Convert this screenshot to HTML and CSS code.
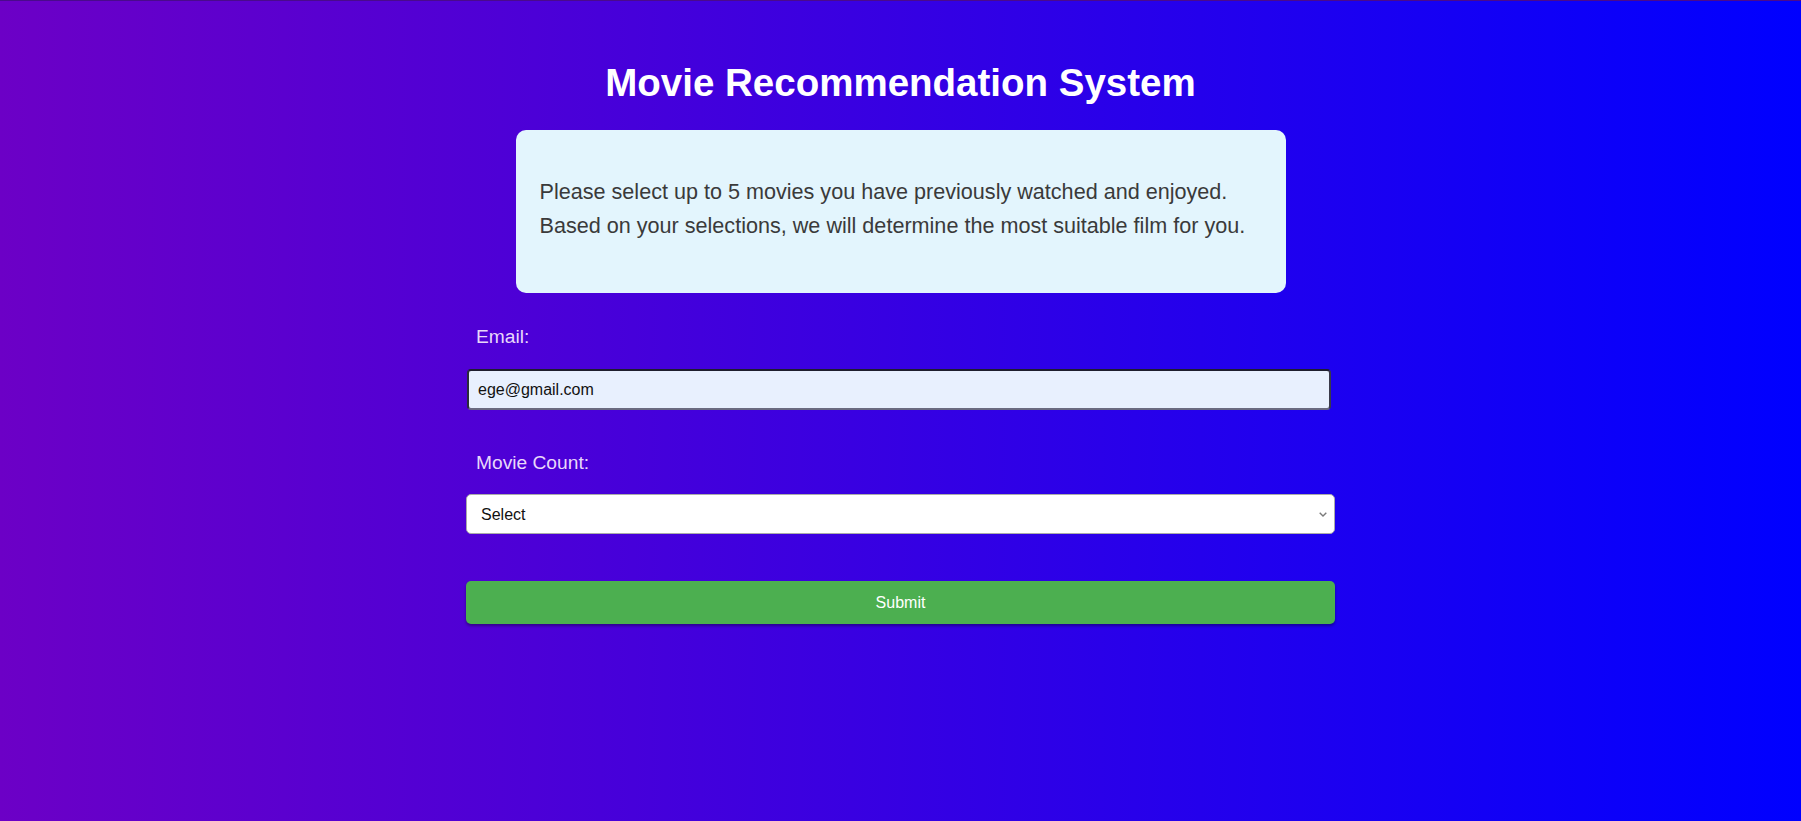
FILE: index.html
```html
<!DOCTYPE html>
<html lang="en">
<head>
<meta charset="utf-8">
<title>Movie Recommendation System</title>
<link rel="stylesheet" href="styles.css">
</head>
<body>
<main class="page">
  <h1 class="title">Movie Recommendation System</h1>
  <section class="intro">
    <p>Please select up to 5 movies you have previously watched and enjoyed.<br>Based on your selections, we will determine the most suitable film for you.</p>
  </section>
  <form class="form">
    <label class="label" for="email">Email:</label>
    <input class="email" id="email" type="email" value="ege@gmail.com">
    <label class="label label-count" for="count">Movie Count:</label>
    <div class="select-wrap">
      <select class="select" id="count">
        <option>Select</option>
        <option>1</option>
        <option>2</option>
        <option>3</option>
        <option>4</option>
        <option>5</option>
      </select>
      <svg class="chevron" width="8" height="5" viewBox="0 0 8 5" aria-hidden="true"><path d="M0.7 0.7 L4 4 L7.3 0.7" fill="none" stroke="#7a7a7a" stroke-width="1.4"/></svg>
    </div>
    <button class="submit" type="button">Submit</button>
  </form>
</main>
</body>
</html>
```
FILE: styles.css
```css
html, body {
  margin: 0;
  padding: 0;
  height: 100%;
}
body {
  background: linear-gradient(to right, #6c00c6 0%, #0000ff 100%);
  border-top: 1px solid #4a0a8c;
  box-sizing: border-box;
  font-family: "Liberation Sans", Arial, sans-serif;
}
.page {
  display: flex;
  flex-direction: column;
  align-items: center;
}
.title {
  margin: 59px 0 24px;
  font-size: 38.5px;
  line-height: 46px;
  font-weight: bold;
  color: #ffffff;
}
.intro {
  width: 770px;
  box-sizing: border-box;
  background: #e3f5fd;
  border-radius: 10px;
  padding: 45px 24px 50px;
}
.intro p {
  margin: 0;
  font-size: 21.6px;
  line-height: 34px;
  color: #3a3a3a;
}
.form {
  width: 869px;
  display: flex;
  flex-direction: column;
  margin-top: 33px;
}
.label {
  display: block;
  padding-left: 10px;
  font-size: 19.2px;
  line-height: 22px;
  color: #e8d8fa;
  margin-bottom: 21px;
}
.label-count {
  margin-top: 42px;
  margin-bottom: 20px;
}
.email {
  width: 864px;
  height: 41px;
  box-sizing: border-box;
  margin: 0 0 0 1px;
  padding: 0 9px;
  font-family: "Liberation Sans", Arial, sans-serif;
  font-size: 16px;
  color: #111;
  background: #e8f0fe;
  border: 2px solid;
  border-color: #1e1e2e #3a3a4a #6a6a80 #2a2a3a;
  border-radius: 4px;
}
.select-wrap {
  position: relative;
  width: 869px;
}
.select {
  display: block;
  width: 100%;
  height: 40px;
  box-sizing: border-box;
  margin: 0;
  padding: 0 14px;
  font-family: "Liberation Sans", Arial, sans-serif;
  font-size: 16px;
  color: #111;
  background: #ffffff;
  border: 1px solid #aaaaaa;
  border-radius: 5px;
  appearance: none;
  -webkit-appearance: none;
}
.chevron {
  position: absolute;
  right: 8px;
  top: 18px;
  pointer-events: none;
}
.submit {
  margin-top: 47px;
  width: 869px;
  height: 43px;
  border: none;
  border-radius: 5px;
  background: #4caf50;
  color: #ffffff;
  font-family: "Liberation Sans", Arial, sans-serif;
  font-size: 16px;
  box-shadow: 0 2px 3px rgba(0, 0, 0, 0.35);
  cursor: pointer;
}
```
